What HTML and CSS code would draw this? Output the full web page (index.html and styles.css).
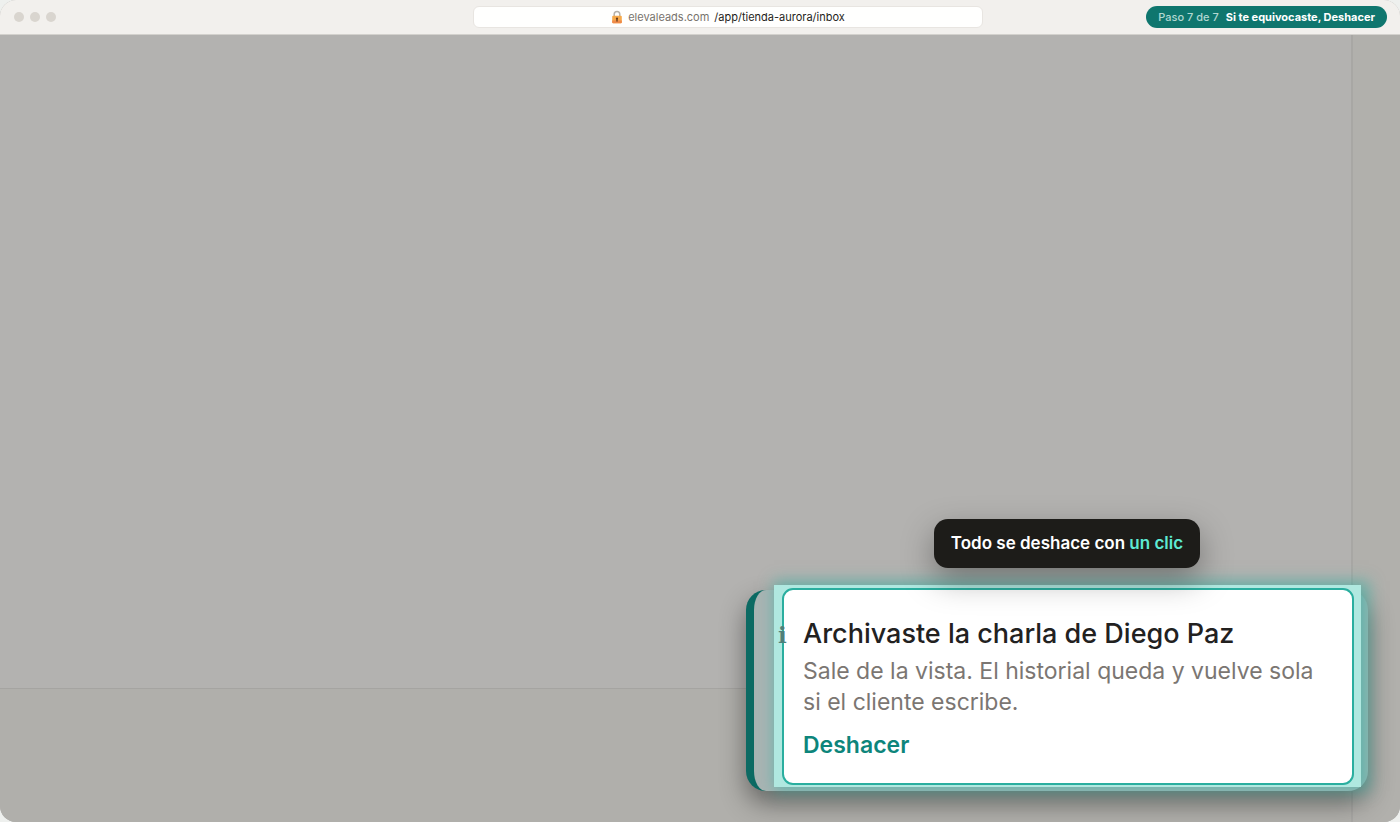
FILE: index.html
```
<!DOCTYPE html>
<html lang="es">
<head>
<meta charset="utf-8">
<meta name="viewport" content="width=device-width, initial-scale=1">
<title>Tienda Aurora – Inbox</title>
<link rel="stylesheet" href="styles.css">
</head>
<body>
<div class="window">
  <header class="chrome">
    <div class="dots"><span class="dot"></span><span class="dot"></span><span class="dot"></span></div>
    <div class="address">
      <svg class="lock" viewBox="0 0 12 14" aria-hidden="true">
        <path d="M3.200 7V4.200a2.800 2.800 0 0 1 5.600 0V7" fill="none" stroke="#b5b1aa" stroke-width="1.5"/>
        <rect x="1.2" y="5.8" width="9.6" height="7.4" rx="1" fill="#f6a94a"/>
        <path d="M1.200 10.500h9.600v1.700a1 1 0 0 1-1 1H2.200a1 1 0 0 1-1-1z" fill="#ef8a4a"/>
        <circle cx="6" cy="8.6" r="1.1" fill="#6b3d1c"/>
        <path d="M5.500 8.600h1l.3 2.800H5.200z" fill="#6b3d1c"/>
      </svg>
      <span class="host">elevaleads.com</span>
      <span class="path">/app/tienda-aurora/inbox</span>
    </div>
    <div class="step"><span class="step-count">Paso 7 de 7</span><strong class="step-title">Si te equivocaste, Deshacer</strong></div>
  </header>
  <main class="stage">
    <section class="pane"></section>
    <aside class="side"></aside>
    <footer class="composer"></footer>
    <div class="callout">
      <div class="tip" role="tooltip">Todo se deshace con <span class="tip-accent">un clic</span></div>
      <div class="toast" role="status">
        <div class="halo">
          <span class="info" aria-hidden="true">i</span>
          <div class="spotlight">
            <h1 class="title">Archivaste la charla de Diego Paz</h1>
            <p class="text">Sale de la vista. El historial queda y vuelve sola si el cliente escribe.</p>
            <button class="undo" type="button">Deshacer</button>
          </div>
        </div>
      </div>
    </div>
  </main>
</div>
</body>
</html>
```
FILE: styles.css
```
* {
  box-sizing: border-box;
}

body {
  margin: 0;
  background: #eef0ee;
  font-family: Inter, "Liberation Sans", sans-serif;
}

.window {
  display: flex;
  flex-direction: column;
  min-height: 100vh;
  overflow: hidden;
  border-radius: 16px;
  background: #b3b2b0;
}

.chrome {
  display: grid;
  grid-template-columns: 459fr 510fr 404fr;
  align-items: center;
  height: 35px;
  padding: 0 13px 0 14px;
  background: #f2f0ed;
  border-bottom: 1px solid #d3d1cd;
}

.dots {
  display: flex;
  gap: 6px;
}

.dot {
  width: 10px;
  height: 10px;
  border-radius: 50%;
  background: #d9d5cf;
}

.address {
  display: flex;
  align-items: center;
  justify-content: center;
  height: 22px;
  border: 1px solid #e8e5e1;
  border-radius: 6px;
  background: #fffffe;
  font-size: 11px;
}

.lock {
  width: 12px;
  height: 14px;
  margin-right: 5px;
}

.host {
  margin-right: 5px;
  color: #78736d;
}

.path {
  color: #1f1e1b;
}

.step {
  display: flex;
  align-items: center;
  justify-self: end;
  gap: 7px;
  height: 22px;
  padding: 0 12px;
  border-radius: 11px;
  background: #0f766e;
  color: #ffffff;
  font-size: 11px;
  white-space: nowrap;
}

.step-count {
  color: #b2d8d2;
  font-weight: 500;
}

.step-title {
  font-weight: 700;
}

.stage {
  position: relative;
  display: grid;
  flex: 1;
  grid-template-columns: 1fr 49px;
  grid-template-rows: 1fr 134px;
}

.side {
  grid-row: 1 / 3;
  grid-column: 2;
  border-left: 2px solid #a8a7a4;
  background: #b1b0ac;
}

.composer {
  border-top: 1px solid #a5a4a1;
  background: #b0afab;
}

.callout {
  position: absolute;
  right: 32px;
  bottom: 31px;
  display: flex;
  flex-direction: column;
  gap: 22px;
}

.tip {
  z-index: 1;
  align-self: center;
  margin-left: 20px;
  padding: 12px 17px;
  border-radius: 14px;
  background: #1d1c19;
  box-shadow: 0 12px 32px rgba(0, 0, 0, 0.35);
  color: #ffffff;
  font-size: 17px;
  font-weight: 600;
  line-height: 25px;
}

.tip-accent {
  color: #5eead4;
}

.toast {
  padding: 0 7px 4px 20px;
  border-left: 8px solid #0c6a63;
  border-radius: 20px;
  background: #a9b4b3;
  box-shadow: 0 12px 26px rgba(0, 0, 0, 0.42);
}

.halo {
  position: relative;
  margin-top: -5px;
  padding: 3px 7px 2px 8px;
  background: #b0e8e0;
  box-shadow: 4px 0 14px 4px rgba(45, 180, 165, 0.55);
}

.info {
  position: absolute;
  top: 36px;
  left: 4px;
  z-index: 1;
  color: #4f7f79;
  font-family: "DejaVu Serif", serif;
  font-size: 23px;
  font-weight: 700;
  line-height: 28px;
}

.spotlight {
  width: 572px;
  padding: 27px 19px 22px;
  border: 2px solid #2aae9f;
  border-radius: 11px;
  background: #ffffff;
}

.title {
  margin: 0;
  color: #22211f;
  font-size: 27px;
  font-weight: 500;
  line-height: 34px;
}

.text {
  margin: 5px 0 0;
  color: #7b7672;
  font-size: 23px;
  line-height: 31px;
}

.undo {
  display: block;
  margin: 12px 0 0;
  padding: 0;
  border: 0;
  background: none;
  color: #0d857b;
  font: 600 23px/31px Inter, "Liberation Sans", sans-serif;
  cursor: pointer;
}
```
